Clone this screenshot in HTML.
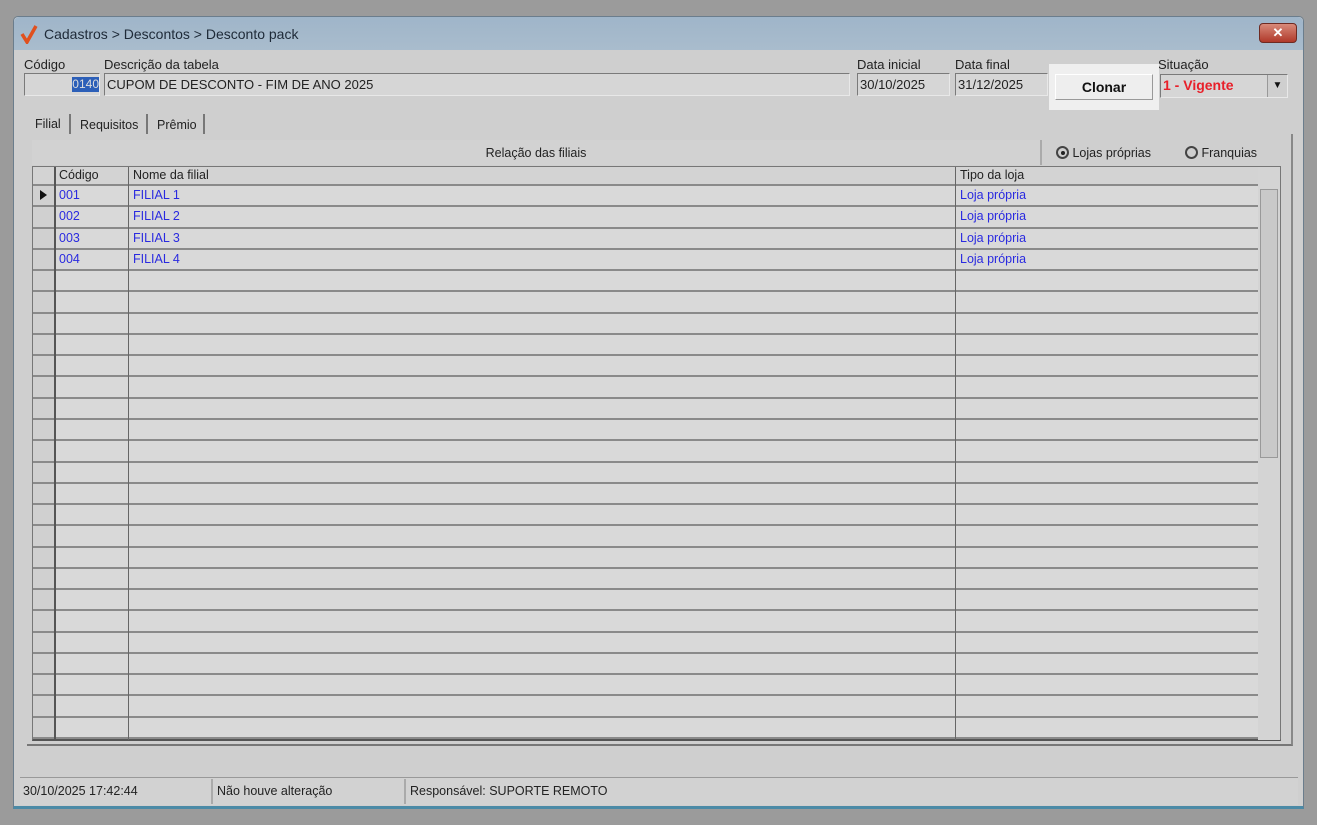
<!DOCTYPE html><html><head><style>
*{margin:0;padding:0;box-sizing:border-box}
body{width:1317px;height:825px;background:#9b9b9b;font-family:"Liberation Sans",sans-serif;font-size:13px;color:#222;position:relative;overflow:hidden}
.a{position:absolute}
.inp{position:absolute;background:#d6d6d6;border:1px solid #7a7a7a;border-right-color:#e8e8e8;border-bottom-color:#e8e8e8;height:23px;line-height:21px;padding-left:2px;font-size:13px}
.lbl{position:absolute;font-size:13px;color:#222}
.row{position:absolute;left:33px;width:1225px;height:21.27px;border-bottom:2px solid #8a8a8a;background:#d9d9d9}
.cell{position:absolute;top:2px;font-size:12.5px;color:#2a2ae0}
</style></head><body>
<div class="a" style="left:13px;top:16px;width:1291px;height:793px;background:#cfcfcf;border:1px solid #6b7d8c;border-radius:5px 5px 0 0;border-bottom:3px solid #4b8aa6"></div>
<div class="a" style="left:14px;top:17px;width:1289px;height:33px;background:linear-gradient(#9fb5c9,#a9bccd);border-radius:5px 5px 0 0"></div>
<svg class="a" style="left:20px;top:24px" width="20" height="20"><path d="M2 10 L7 18 L16 2" stroke="#e0501e" stroke-width="3.5" fill="none"/></svg>
<div class="a" style="left:44px;top:26px;font-size:14px;color:#1e2a38">Cadastros &gt; Descontos &gt; Desconto pack</div>
<div class="a" style="left:1259px;top:23px;width:38px;height:20px;background:linear-gradient(#d88a7a,#b0392a);border:1px solid #6e2a22;border-radius:4px;color:#fff;text-align:center;font-weight:bold;font-size:13px;line-height:18px">✕</div>
<div class="a" style="left:20px;top:51px;width:1278px;height:724px;background:#cfcfcf"></div>
<div class="lbl" style="left:24px;top:57px">Código</div>
<div class="lbl" style="left:104px;top:57px">Descrição da tabela</div>
<div class="lbl" style="left:857px;top:57px">Data inicial</div>
<div class="lbl" style="left:955px;top:57px">Data final</div>
<div class="lbl" style="left:1158px;top:57px">Situação</div>
<div class="inp" style="left:24px;top:73px;width:76px"><span style="position:absolute;right:0;top:3px;background:#2c5fb8;color:#ddd;line-height:15px;font-size:12px">0140</span></div>
<div class="inp" style="left:104px;top:73px;width:746px">CUPOM DE DESCONTO - FIM DE ANO 2025</div>
<div class="inp" style="left:857px;top:73px;width:93px">30/10/2025</div>
<div class="inp" style="left:955px;top:73px;width:93px">31/12/2025</div>
<div class="a" style="left:1049px;top:64px;width:110px;height:46px;background:#efefef"></div>
<div class="a" style="left:1055px;top:74px;width:98px;height:26px;background:#eeeeee;border:1px solid #999;border-top-color:#fff;border-left-color:#fff;text-align:center;line-height:24px;font-weight:bold;font-size:14px;color:#111">Clonar</div>
<div class="inp" style="left:1160px;top:74px;width:128px;height:24px;color:#e8202a;font-weight:bold;font-size:14px">1 - Vigente<span style="position:absolute;right:0;top:0;width:20px;height:22px;background:#cfcfcf;border-left:1px solid #999;color:#111;font-size:10px;text-align:center">▼</span></div>
<div class="a" style="left:35px;top:117px;font-size:12.5px">Filial</div>
<div class="a" style="left:69px;top:114px;width:2px;height:20px;background:#777"></div>
<div class="a" style="left:80px;top:118px;font-size:12.5px">Requisitos</div>
<div class="a" style="left:146px;top:114px;width:2px;height:20px;background:#777"></div>
<div class="a" style="left:157px;top:118px;font-size:12.5px">Prêmio</div>
<div class="a" style="left:203px;top:114px;width:2px;height:20px;background:#777"></div>
<div class="a" style="left:27px;top:134px;width:1266px;height:612px;border-right:2px solid #888;border-bottom:2px solid #777"></div>
<div class="a" style="left:32px;top:140px;width:1010px;height:25px;background:#d2d2d2;border-right:2px solid #aaa;text-align:center;line-height:26px;font-size:12.5px">Relação das filiais</div>
<div class="a" style="left:1056px;top:146px;font-size:12.5px"><span style="display:inline-block;width:13px;height:13px;border:2px solid #444;border-radius:50%;vertical-align:-2px;position:relative"><span style="position:absolute;left:2.5px;top:2.5px;width:4px;height:4px;background:#222;border-radius:50%"></span></span> Lojas próprias</div>
<div class="a" style="left:1185px;top:146px;font-size:12.5px"><span style="display:inline-block;width:13px;height:13px;border:2px solid #444;border-radius:50%;vertical-align:-2px"></span> Franquias</div>
<div class="a" style="left:32px;top:166px;width:1249px;height:575px;background:#d9d9d9;border:1px solid #777;border-bottom:2px solid #555"></div>
<div class="a" style="left:33px;top:167px;width:1225px;height:19px;background:#d3d3d3;border-bottom:2px solid #8a8a8a"></div>
<div class="a" style="left:59px;top:168px;font-size:12.5px">Código</div>
<div class="a" style="left:133px;top:168px;font-size:12.5px">Nome da filial</div>
<div class="a" style="left:960px;top:168px;font-size:12.5px">Tipo da loja</div>
<div id="rows"></div>
<div class="a" style="left:33px;top:167px;width:23px;height:573px;border-right:2px solid #555"></div>
<div class="a" style="left:128px;top:167px;width:1px;height:573px;background:#666"></div>
<div class="a" style="left:955px;top:167px;width:1px;height:573px;background:#666"></div>
<div class="a" style="left:1258px;top:167px;width:22px;height:573px;background:#d4d4d4"></div>
<div class="a" style="left:1260px;top:189px;width:18px;height:269px;background:#c9c9c9;border:1px solid #999"></div>
<div class="a" style="left:40px;top:190px;width:0;height:0;border-left:7px solid #111;border-top:5px solid transparent;border-bottom:5px solid transparent"></div>
<script>
var h='';var n=["FILIAL 1","FILIAL 2","FILIAL 3","FILIAL 4"];
for(var i=0;i<26;i++){var t=186+i*21.27;h+='<div class="row" style="top:'+t+'px"><div style="position:absolute;left:0;top:0;width:23px;height:100%;background:#d0d0d0"></div>';
if(i<4)h+='<span class="cell" style="left:26px">00'+(i+1)+'</span><span class="cell" style="left:100px">'+n[i]+'</span><span class="cell" style="left:927px">Loja própria</span>';
h+='</div>';}
document.getElementById('rows').outerHTML=h;
</script>
<div class="a" style="left:20px;top:777px;width:1278px;height:28px;background:#d2d2d2;border-top:1px solid #999"></div>
<div class="a" style="left:211px;top:779px;width:2px;height:25px;background:#aaa"></div>
<div class="a" style="left:404px;top:779px;width:2px;height:25px;background:#aaa"></div>
<div class="a" style="left:23px;top:784px;font-size:12.5px">30/10/2025 17:42:44</div>
<div class="a" style="left:217px;top:784px;font-size:12.5px">Não houve alteração</div>
<div class="a" style="left:410px;top:784px;font-size:12.5px">Responsável: SUPORTE REMOTO</div>
</body></html>
